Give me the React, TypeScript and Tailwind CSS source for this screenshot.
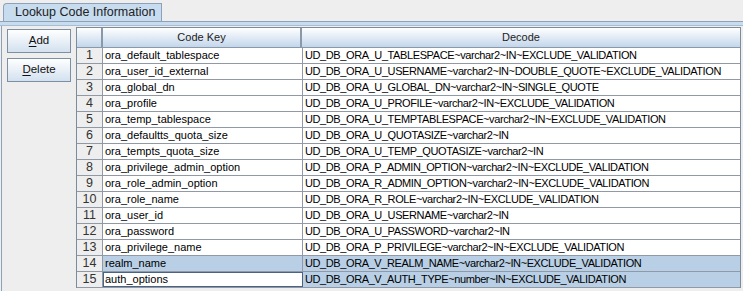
import React from "react";

const rows: [string, string][] = [
  ["ora_default_tablespace", "UD_DB_ORA_U_TABLESPACE~varchar2~IN~EXCLUDE_VALIDATION"],
  ["ora_user_id_external", "UD_DB_ORA_U_USERNAME~varchar2~IN~DOUBLE_QUOTE~EXCLUDE_VALIDATION"],
  ["ora_global_dn", "UD_DB_ORA_U_GLOBAL_DN~varchar2~IN~SINGLE_QUOTE"],
  ["ora_profile", "UD_DB_ORA_U_PROFILE~varchar2~IN~EXCLUDE_VALIDATION"],
  ["ora_temp_tablespace", "UD_DB_ORA_U_TEMPTABLESPACE~varchar2~IN~EXCLUDE_VALIDATION"],
  ["ora_defaultts_quota_size", "UD_DB_ORA_U_QUOTASIZE~varchar2~IN"],
  ["ora_tempts_quota_size", "UD_DB_ORA_U_TEMP_QUOTASIZE~varchar2~IN"],
  ["ora_privilege_admin_option", "UD_DB_ORA_P_ADMIN_OPTION~varchar2~IN~EXCLUDE_VALIDATION"],
  ["ora_role_admin_option", "UD_DB_ORA_R_ADMIN_OPTION~varchar2~IN~EXCLUDE_VALIDATION"],
  ["ora_role_name", "UD_DB_ORA_R_ROLE~varchar2~IN~EXCLUDE_VALIDATION"],
  ["ora_user_id", "UD_DB_ORA_U_USERNAME~varchar2~IN"],
  ["ora_password", "UD_DB_ORA_U_PASSWORD~varchar2~IN"],
  ["ora_privilege_name", "UD_DB_ORA_P_PRIVILEGE~varchar2~IN~EXCLUDE_VALIDATION"],
  ["realm_name", "UD_DB_ORA_V_REALM_NAME~varchar2~IN~EXCLUDE_VALIDATION"],
  ["auth_options", "UD_DB_ORA_V_AUTH_TYPE~number~IN~EXCLUDE_VALIDATION"],
];

function Btn({ first, rest }: { first: string; rest: string }) {
  return (
    <button className="w-[64px] h-[24px] border border-[#7f8fa3] bg-gradient-to-b from-[#ffffff] to-[#d3e1ef] text-[11.5px] text-[#111] flex items-center justify-center leading-none">
      <span className="underline underline-offset-2">{first}</span>
      <span>{rest}</span>
    </button>
  );
}

export default function App() {
  return (
    <div
      className="w-[743px] h-[291px] bg-[#eeeeee] overflow-hidden flex flex-col"
      style={{ fontFamily: '"Liberation Sans", Arial, sans-serif' }}
    >
      {/* tab strip */}
      <div className="h-[21px] flex items-end pl-[3px]">
        <div
          className="h-[18px] w-[159px] bg-[#c8dcf0] border-t border-l border-r border-[#8ea1b8] text-[12.5px] text-[#222] pl-[11px] leading-[17px]"
          style={{ borderTopLeftRadius: 4 }}
        >
          Lookup Code Information
        </div>
      </div>
      {/* band */}
      <div className="h-[5px] border-t border-[#8ea1b8] bg-[#c8dcf0] border-b border-b-[#a9bcd2]" />
      {/* content */}
      <div className="flex-1 flex ml-[1px] border-l border-[#8ea1b8] min-h-0">
        <div className="w-[74px] flex flex-col gap-[5px] pl-[5px] pt-[3px]">
          <Btn first="A" rest="dd" />
          <Btn first="D" rest="elete" />
        </div>
        <div className="w-[665px] mt-[1px] flex flex-col">
          <div className="border border-[#7d8c9c] border-b-0 flex flex-col text-[11px] text-black">
            {/* header */}
            <div className="h-[20px] flex bg-gradient-to-b from-[#ffffff] to-[#c3d6eb] border-b border-[#8a99aa]">
              <div className="w-[26px] border-r-2 border-[#8a99aa]" />
              <div className="w-[199px] border-r-2 border-[#8a99aa] flex items-center justify-center text-[11px] text-[#222]">
                Code Key
              </div>
              <div className="flex-1 flex items-center justify-center text-[11px] text-[#222]">Decode</div>
            </div>
            {rows.map(([k, v], i) => {
              const sel = i >= 13;
              const editing = i === 14;
              return (
                <div key={i} className="h-[16px] flex border-b border-[#8f9aa6] leading-[15px]">
                  <div className="w-[26px] shrink-0 border-r border-[#8f9aa6] bg-[#eeeeee] text-center text-[12.5px] text-[#333]">
                    {i + 1}
                  </div>
                  <div
                    className={
                      "w-[200px] shrink-0 border-r border-[#8f9aa6] pl-[2px] whitespace-nowrap overflow-hidden " +
                      (editing
                        ? "bg-white outline outline-1 outline-[#4b6283] -outline-offset-1"
                        : sel
                        ? "bg-[#b8cfe5]"
                        : "bg-white")
                    }
                  >
                    {k}
                  </div>
                  <div
                    className={
                      "flex-1 pl-[2px] whitespace-nowrap overflow-hidden tracking-[-0.4px] " +
                      (sel ? "bg-[#b8cfe5]" : "bg-white")
                    }
                  >
                    {v}
                  </div>
                </div>
              );
            })}
          </div>
        </div>
      </div>
    </div>
  );
}
